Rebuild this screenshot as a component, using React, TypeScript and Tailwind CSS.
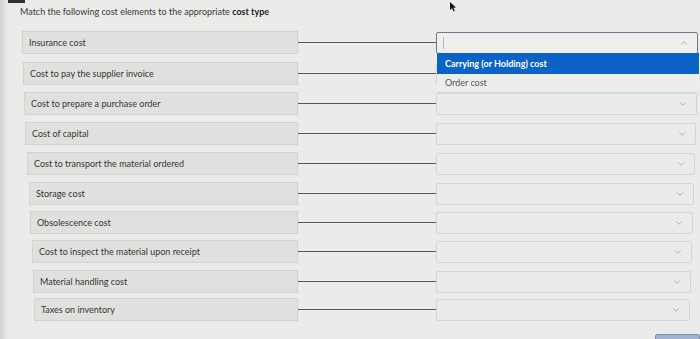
import { ChevronDown, ChevronUp } from "lucide-react";

type Row = {
  label: string;
  rowClass: string;
  boxClass: string;
  selectClass: string;
};

const rows: Row[] = [
  { label: "Insurance cost", rowClass: "mt-[31px]", boxClass: "ml-[22px] w-[276px]", selectClass: "mr-[2px]" },
  { label: "Cost to pay the supplier invoice", rowClass: "mt-[8px]", boxClass: "ml-[23px] w-[275px]", selectClass: "mr-[3px]" },
  { label: "Cost to prepare a purchase order", rowClass: "mt-[7px]", boxClass: "ml-[24px] w-[274px]", selectClass: "mr-[3px]" },
  { label: "Cost of capital", rowClass: "mt-[7px]", boxClass: "ml-[25px] w-[273px]", selectClass: "mr-[4px]" },
  { label: "Cost to transport the material ordered", rowClass: "mt-[7px]", boxClass: "ml-[27px] w-[271px]", selectClass: "mr-[5px]" },
  { label: "Storage cost", rowClass: "mt-[7px]", boxClass: "ml-[29px] w-[269px]", selectClass: "mr-[6px]" },
  { label: "Obsolescence cost", rowClass: "mt-[6px]", boxClass: "ml-[30px] w-[268px]", selectClass: "mr-[7px]" },
  { label: "Cost to inspect the material upon receipt", rowClass: "mt-[6px]", boxClass: "ml-[32px] w-[266px]", selectClass: "mr-[8px]" },
  { label: "Material handling cost", rowClass: "mt-[7px]", boxClass: "ml-[33px] w-[265px]", selectClass: "mr-[9px]" },
  { label: "Taxes on inventory", rowClass: "mt-[5px]", boxClass: "ml-[34px] w-[264px]", selectClass: "mr-[10px]" },
];

const App = () => {
  return (
    <div
      className="relative w-[700px] h-[339px] overflow-hidden bg-[#ebebe9] text-[#333]"
      style={{ fontFamily: "Lato, 'Open Sans', sans-serif" }}
    >
      {/* dark tab in the corner and the darker left edge of the photo */}
      <div className="absolute left-0 top-0 w-[25px] h-[3px] bg-[#2f2f31]" />
      <div className="absolute left-0 top-0 w-[8px] h-full bg-gradient-to-r from-[#d2d2d0] to-[#ebebe9]" />

      {/* mouse pointer */}
      <svg className="absolute left-[449px] top-[2px]" width="8" height="10" viewBox="0 0 8 10">
        <path d="M1 0 L1 8 L3 6.2 L4.6 9.4 L5.8 8.8 L4.3 5.8 L7 5.6 Z" fill="#111" />
      </svg>

      <div className="relative pl-[20px] pt-[6px] text-[9px] leading-[12px] text-[#3a3a3a]">
        Match the following cost elements to the appropriate <span className="font-bold text-[#222]">cost type</span>
      </div>

      <div className="absolute left-0 top-0 w-full flex flex-col">
        {rows.map((row, i) => (
          <div key={i} className={`flex items-center h-[23px] ${row.rowClass}`}>
            <div
              className={`shrink-0 h-full flex items-center pl-[6px] bg-[#e0e0de] border border-[#d2d2d0] text-[9px] text-[#363636] ${row.boxClass}`}
            >
              {row.label}
            </div>
            <div className="shrink-0 w-[138px] h-[1.5px] bg-[#58585a]" />
            <div
              className={`flex-1 h-[22px] flex items-center justify-end pr-[8px] rounded-[2px] border ${
                i === 0 ? "border-[#6d7894] bg-[#efefed]" : "border-[#d5d5d3] bg-[#ebebe9]"
              } ${row.selectClass}`}
            >
              {i === 0 && <div className="mr-auto ml-[6px] w-px h-[12px] bg-[#b8b8b8]" />}
              {i === 0 ? (
                <ChevronUp size={10} strokeWidth={1.6} className="text-[#8c8c8c]" />
              ) : (
                <ChevronDown size={10} strokeWidth={1.6} className="text-[#8c8c8c]" />
              )}
            </div>
          </div>
        ))}
      </div>

      {/* open dropdown list under the first select */}
      <div className="absolute left-[437px] top-[53px] w-[262px] flex flex-col text-[9px]">
        <div className="h-[21px] flex items-center pl-[8px] bg-[#0b63c8] text-white font-bold">
          Carrying (or Holding) cost
        </div>
        <div className="h-[19px] flex items-center pl-[8px] bg-[#ededeb] text-[#555] border-b border-[#d5d5d3]">
          Order cost
        </div>
      </div>

      {/* partly visible button at the bottom right */}
      <div className="absolute left-[655px] top-[334px] w-[45px] h-[8px] bg-[#9fb3cf] border border-[#7d92b3] rounded-t-[2px]" />
    </div>
  );
};

export default App;
